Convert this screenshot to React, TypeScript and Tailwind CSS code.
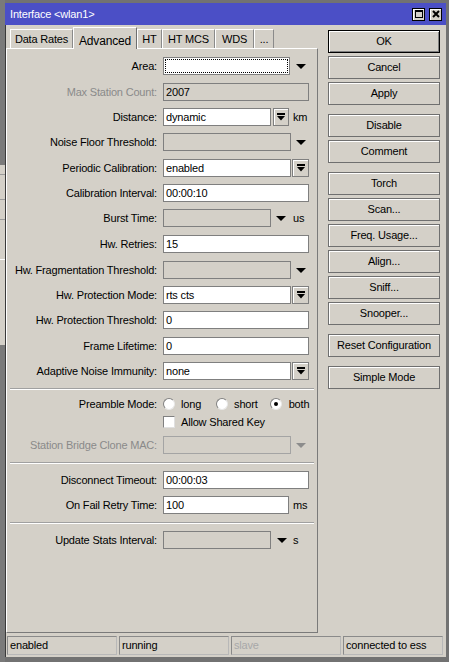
import type { ReactNode } from 'react';

const font = "font-['Liberation_Sans',Arial,sans-serif]";

function Arrow({ gray }: { gray?: boolean }) {
  return (
    <svg width="10" height="5" viewBox="0 0 10 5" className="shrink-0">
      <polygon points="0,0 10,0 5,5" fill={gray ? '#8c8c8c' : '#000'} />
    </svg>
  );
}

function DropButton({ w = 'w-[17px]', ml = 'ml-[1px]' }: { w?: string; ml?: string }) {
  return (
    <div className={`${w} ${ml} flex h-[18px] shrink-0 items-center justify-center border border-[#7f7f7f] bg-[#d4d0c8] shadow-[inset_1px_1px_0_#fff]`}>
      <svg width="8" height="8" viewBox="0 0 8 8">
        <rect x="0" y="0" width="8" height="2" fill="#000" />
        <polygon points="0,3 8,3 4,7.5" fill="#000" />
      </svg>
    </div>
  );
}

interface FieldProps {
  w: string;
  value?: string;
  disabled?: boolean;
  dotted?: boolean;
  light?: boolean;
}

function Field({ w, value, disabled, dotted, light }: FieldProps) {
  return (
    <div
      className={`${w} relative flex h-[18px] shrink-0 items-center border pl-[2px] text-black ${light ? 'border-[#a4a4a4]' : 'border-[#7f7f7f]'} ${disabled ? 'bg-[#d4d0c8]' : 'bg-white'}`}
    >
      {dotted ? <span className="absolute inset-[1px] border border-dotted border-black" /> : null}
      <span className="leading-none">{value}</span>
    </div>
  );
}

function Row({ label, mt, gray, h = 'h-[18px]', children }: { label: string; mt: string; gray?: boolean; h?: string; children: ReactNode }) {
  return (
    <div className={`flex ${h} ${mt} items-center`}>
      <span className={`w-[150px] shrink-0 text-right leading-none ${gray ? 'text-[#8a8a8a]' : 'text-black'}`}>{label}</span>
      <div className="ml-[6px] flex h-full items-center">{children}</div>
    </div>
  );
}

function Separator({ mt }: { mt: string }) {
  return <div className={`mx-[3px] ${mt} h-[2px] border-t border-b border-t-[#a0a0a0] border-b-white`} />;
}

function Radio({ checked }: { checked?: boolean }) {
  return (
    <span className="flex h-[12px] w-[12px] shrink-0 items-center justify-center rounded-full border border-t-[#808080] border-l-[#808080] border-r-[#e8e8e8] border-b-[#e8e8e8] bg-white">
      {checked ? <span className="h-[4px] w-[4px] rounded-full bg-black" /> : null}
    </span>
  );
}

function SideButton({ label, mt, primary }: { label: string; mt: string; primary?: boolean }) {
  return (
    <div
      className={`${mt} flex h-[23px] w-[112px] items-center justify-center border bg-[#d4d0c8] text-black ${primary ? 'border-black shadow-[inset_1px_1px_0_#fff,inset_-1px_-1px_0_#808080]' : 'border-[#6f6f6f] shadow-[inset_1px_1px_0_#fff]'}`}
    >
      {label}
    </div>
  );
}

const tabs = [
  { label: 'Data Rates', w: 'w-[63px]' },
  { label: 'Advanced', w: 'w-[64px]', active: true },
  { label: 'HT', w: 'w-[25px]' },
  { label: 'HT MCS', w: 'w-[53px]' },
  { label: 'WDS', w: 'w-[39px]' },
  { label: '...', w: 'w-[20px]' },
];

const status = [
  { label: 'enabled', w: 'w-[110px]' },
  { label: 'running', w: 'w-[110px]' },
  { label: 'slave', w: 'w-[110px]', gray: true },
  { label: 'connected to ess', w: 'w-[100px]' },
];

export default function App() {
  return (
    <div className={`${font} flex h-[662px] w-[449px] bg-[#727272] text-[11px] tracking-[-0.18px]`}>
      {/* strip of the window behind */}
      <div className="flex w-[5px] shrink-0 flex-col">
        <div className="h-[165px] bg-[#7a7a7a]" />
        <div className="h-[10px] border-b border-[#9a9a9a] bg-[#d4d0c8]" />
        <div className="h-[25px] border-b border-[#9a9a9a] bg-[#d4d0c8]" />
        <div className="h-[20px] border-b border-[#9a9a9a] bg-[#d4d0c8]" />
        <div className="h-[40px] border-b border-white bg-[#d4d0c8]" />
        <div className="h-[85px] bg-[#d4d0c8]" />
        <div className="flex-1 bg-[#7a7a7a]" />
      </div>

      <div className="flex min-w-0 flex-1 flex-col pb-[5px] pr-[3px] pt-[3px]">
        <div className="flex h-[22px] shrink-0 items-center bg-[#4b4fc6] pl-[5px] pr-[4px]">
          <span className="flex-1 text-[11px] leading-none text-white">{'Interface <wlan1>'}</span>
          <div className="flex h-[13px] w-[13px] items-center justify-center border border-black bg-[#d4d0c8] shadow-[inset_1px_1px_0_#fff]">
            <span className="h-[8px] w-[8px] border border-t-2 border-black" />
          </div>
          <div className="ml-[4px] flex h-[13px] w-[13px] items-center justify-center border border-black bg-[#d4d0c8] shadow-[inset_1px_1px_0_#fff]">
            <svg width="8" height="8" viewBox="0 0 8 8">
              <path d="M1 1 L7 7 M7 1 L1 7" stroke="#000" strokeWidth="2" />
            </svg>
          </div>
        </div>

        <div className="flex flex-1 flex-col border-l border-[#3a3a3a] bg-[#d4d0c8]">
          <div className="flex">
            <div className="flex w-[312px] shrink-0 flex-col">
              <div className="flex h-[23px] items-end pl-[4px]">
                {tabs.map((t) =>
                  t.active ? (
                    <div
                      key={t.label}
                      className={`${t.w} relative z-10 -mb-px flex h-[22px] items-start justify-center border-l border-t border-r border-l-white border-t-white border-r-[#6f6f6f] bg-[#d4d0c8] pt-[4px] text-[12px] text-black`}
                    >
                      {t.label}
                    </div>
                  ) : (
                    <div
                      key={t.label}
                      className={`${t.w} flex h-[19px] items-center justify-center border-l border-t border-r border-l-white border-t-white border-r-[#8a8a8a] bg-[#d4d0c8] pt-[1px] text-black`}
                    >
                      {t.label}
                    </div>
                  ),
                )}
              </div>

              <div className="h-[585px] border border-l-white border-t-white border-r-[#7a7a7a] border-b-[#7a7a7a]">
                <Row label="Area:" mt="mt-[8px]">
                  <Field w="w-[127px]" dotted />
                  <span className="ml-[6px]"><Arrow /></span>
                </Row>
                <Row label="Max Station Count:" mt="mt-[8px]" gray>
                  <Field w="w-[146px]" value="2007" disabled />
                </Row>
                <Row label="Distance:" mt="mt-[7px]">
                  <Field w="w-[108px]" value="dynamic" />
                  <DropButton w="w-[16px]" ml="ml-[2px]" />
                  <span className="ml-[4px] leading-none">km</span>
                </Row>
                <Row label="Noise Floor Threshold:" mt="mt-[7px]">
                  <Field w="w-[128px]" disabled />
                  <span className="ml-[5px]"><Arrow /></span>
                </Row>
                <Row label="Periodic Calibration:" mt="mt-[8px]">
                  <Field w="w-[128px]" value="enabled" />
                  <DropButton />
                </Row>
                <Row label="Calibration Interval:" mt="mt-[7px]">
                  <Field w="w-[146px]" value="00:00:10" />
                </Row>
                <Row label="Burst Time:" mt="mt-[7px]">
                  <Field w="w-[108px]" disabled />
                  <span className="ml-[5px]"><Arrow /></span>
                  <span className="ml-[7px] leading-none">us</span>
                </Row>
                <Row label="Hw. Retries:" mt="mt-[8px]">
                  <Field w="w-[146px]" value="15" />
                </Row>
                <Row label="Hw. Fragmentation Threshold:" mt="mt-[8px]">
                  <Field w="w-[128px]" disabled />
                  <span className="ml-[5px]"><Arrow /></span>
                </Row>
                <Row label="Hw. Protection Mode:" mt="mt-[7px]">
                  <Field w="w-[128px]" value="rts cts" />
                  <DropButton />
                </Row>
                <Row label="Hw. Protection Threshold:" mt="mt-[7px]">
                  <Field w="w-[146px]" value="0" />
                </Row>
                <Row label="Frame Lifetime:" mt="mt-[8px]">
                  <Field w="w-[146px]" value="0" />
                </Row>
                <Row label="Adaptive Noise Immunity:" mt="mt-[7px]">
                  <Field w="w-[128px]" value="none" />
                  <DropButton />
                </Row>

                <Separator mt="mt-[8px]" />

                <Row label="Preamble Mode:" mt="mt-[7px]" h="h-[14px]">
                  <Radio />
                  <span className="ml-[6px] leading-none">long</span>
                  <span className="ml-[15px]"><Radio /></span>
                  <span className="ml-[6px] leading-none">short</span>
                  <span className="ml-[12px]"><Radio checked /></span>
                  <span className="ml-[7px] leading-none">both</span>
                </Row>
                <Row label="" mt="mt-[5px]" h="h-[12px]">
                  <span className="h-[12px] w-[12px] border border-t-[#808080] border-l-[#808080] border-r-[#e0e0e0] border-b-[#e0e0e0] bg-white" />
                  <span className="ml-[6px] leading-none">Allow Shared Key</span>
                </Row>
                <Row label="Station Bridge Clone MAC:" mt="mt-[8px]" gray>
                  <Field w="w-[128px]" disabled light />
                  <span className="ml-[5px]"><Arrow gray /></span>
                </Row>

                <Separator mt="mt-[8px]" />

                <Row label="Disconnect Timeout:" mt="mt-[7px]">
                  <Field w="w-[146px]" value="00:00:03" />
                </Row>
                <Row label="On Fail Retry Time:" mt="mt-[7px]">
                  <Field w="w-[126px]" value="100" />
                  <span className="ml-[4px] leading-none">ms</span>
                </Row>

                <Separator mt="mt-[8px]" />

                <Row label="Update Stats Interval:" mt="mt-[7px]">
                  <Field w="w-[108px]" disabled />
                  <span className="ml-[6px]"><Arrow /></span>
                  <span className="ml-[6px] leading-none">s</span>
                </Row>
              </div>
            </div>

            <div className="ml-[10px] flex flex-col pt-[5px]">
              <SideButton label="OK" mt="mt-0" primary />
              <SideButton label="Cancel" mt="mt-[3px]" />
              <SideButton label="Apply" mt="mt-[3px]" />
              <SideButton label="Disable" mt="mt-[9px]" />
              <SideButton label="Comment" mt="mt-[3px]" />
              <SideButton label="Torch" mt="mt-[9px]" />
              <SideButton label="Scan..." mt="mt-[3px]" />
              <SideButton label="Freq. Usage..." mt="mt-[3px]" />
              <SideButton label="Align..." mt="mt-[3px]" />
              <SideButton label="Sniff..." mt="mt-[3px]" />
              <SideButton label="Snooper..." mt="mt-[3px]" />
              <SideButton label="Reset Configuration" mt="mt-[9px]" />
              <SideButton label="Simple Mode" mt="mt-[9px]" />
            </div>
          </div>

          <div className="mt-[3px] flex h-[19px] gap-[2px] pl-[1px]">
            {status.map((s) => (
              <div
                key={s.label}
                className={`${s.w} flex items-center border border-t-[#8a8a8a] border-l-[#8a8a8a] border-r-[#b8b8b8] border-b-[#b8b8b8] pl-[2px] leading-none ${s.gray ? 'text-[#a8a8a8]' : 'text-black'}`}
              >
                {s.label}
              </div>
            ))}
          </div>
        </div>
      </div>
    </div>
  );
}
